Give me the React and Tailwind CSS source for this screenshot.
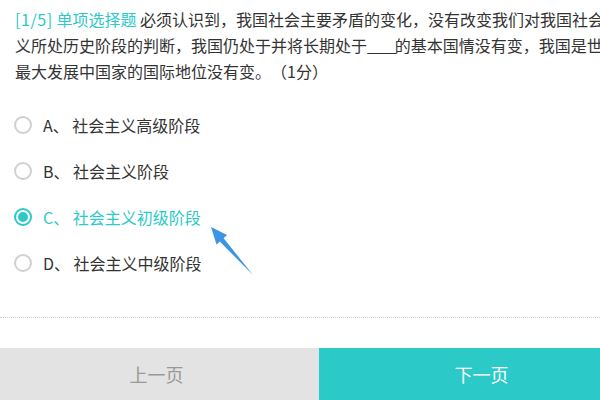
const options = [
    { key: "A", text: "社会主义高级阶段" },
    { key: "B", text: "社会主义阶段" },
    { key: "C", text: "社会主义初级阶段" },
    { key: "D", text: "社会主义中级阶段" },
];

const Radio = ({ checked }) => (
    <span
        className={
            checked
                ? "flex h-[18px] w-[18px] items-center justify-center rounded-full border-2 border-[#2cc9c8]"
                : "flex h-[18px] w-[18px] items-center justify-center rounded-full border-2 border-[#d0d0d0]"
        }
    >
        {checked && <span className="h-[10px] w-[10px] rounded-full bg-[#2cc9c8]" />}
    </span>
);

const Arrow = () => (
    <svg className="absolute left-0 top-0 pointer-events-none" width="600" height="400" viewBox="0 0 600 400">
        <polygon
            points="211,227 227,235 223.6,238.2 253,275 219.8,241.6 216.5,244.6"
            fill="#3b95e1"
        />
    </svg>
);

export default function App() {
    const selected = "C";

    return (
        <div className="relative h-[400px] w-[600px] overflow-hidden bg-white font-['Microsoft_YaHei','Noto_Sans_CJK_SC',sans-serif] [text-spacing-trim:space-all]">
            <div className="w-[644px]">
                <p className="px-[15px] pt-[6px] text-[16px] leading-[26px] text-[#333]">
                    <span className="text-[#2cc9c8]">
                        <span className="tracking-[0.6px]">[1/5]</span> 单项选择题
                    </span>{" "}
                    必须认识到，我国社会主要矛盾的变化，没有改变我们对我国社会主义所处历史阶段的判断，我国仍处于并将长期处于<span className="tracking-[-2px]">____</span>的基本国情没有变，我国是世界最大发展中国家的国际地位没有变。（1分）
                </p>

                <ul className="mt-[18px]">
                    {options.map((opt) => {
                        const checked = opt.key === selected;
                        return (
                            <li key={opt.key} className="flex h-[46px] items-center pl-[14px]">
                                <Radio checked={checked} />
                                <span
                                    className={
                                        checked
                                            ? "ml-[11px] text-[16px] text-[#2cc9c8]"
                                            : "ml-[11px] text-[16px] text-[#333]"
                                    }
                                >
                                    {opt.key}、 {opt.text}
                                </span>
                            </li>
                        );
                    })}
                </ul>

                <div className="mt-[31px] border-t border-dotted border-[#cfcfcf]" />

                <div className="mt-[30px] flex h-[52px]">
                    <button className="flex w-[319px] items-center justify-center bg-[#e3e3e3] pr-[6px] text-[18px] text-[#999]">
                        上一页
                    </button>
                    <button className="flex flex-1 items-center justify-center bg-[#2bc9c8] text-[18px] text-white">
                        下一页
                    </button>
                </div>
            </div>
            <Arrow />
        </div>
    );
}
